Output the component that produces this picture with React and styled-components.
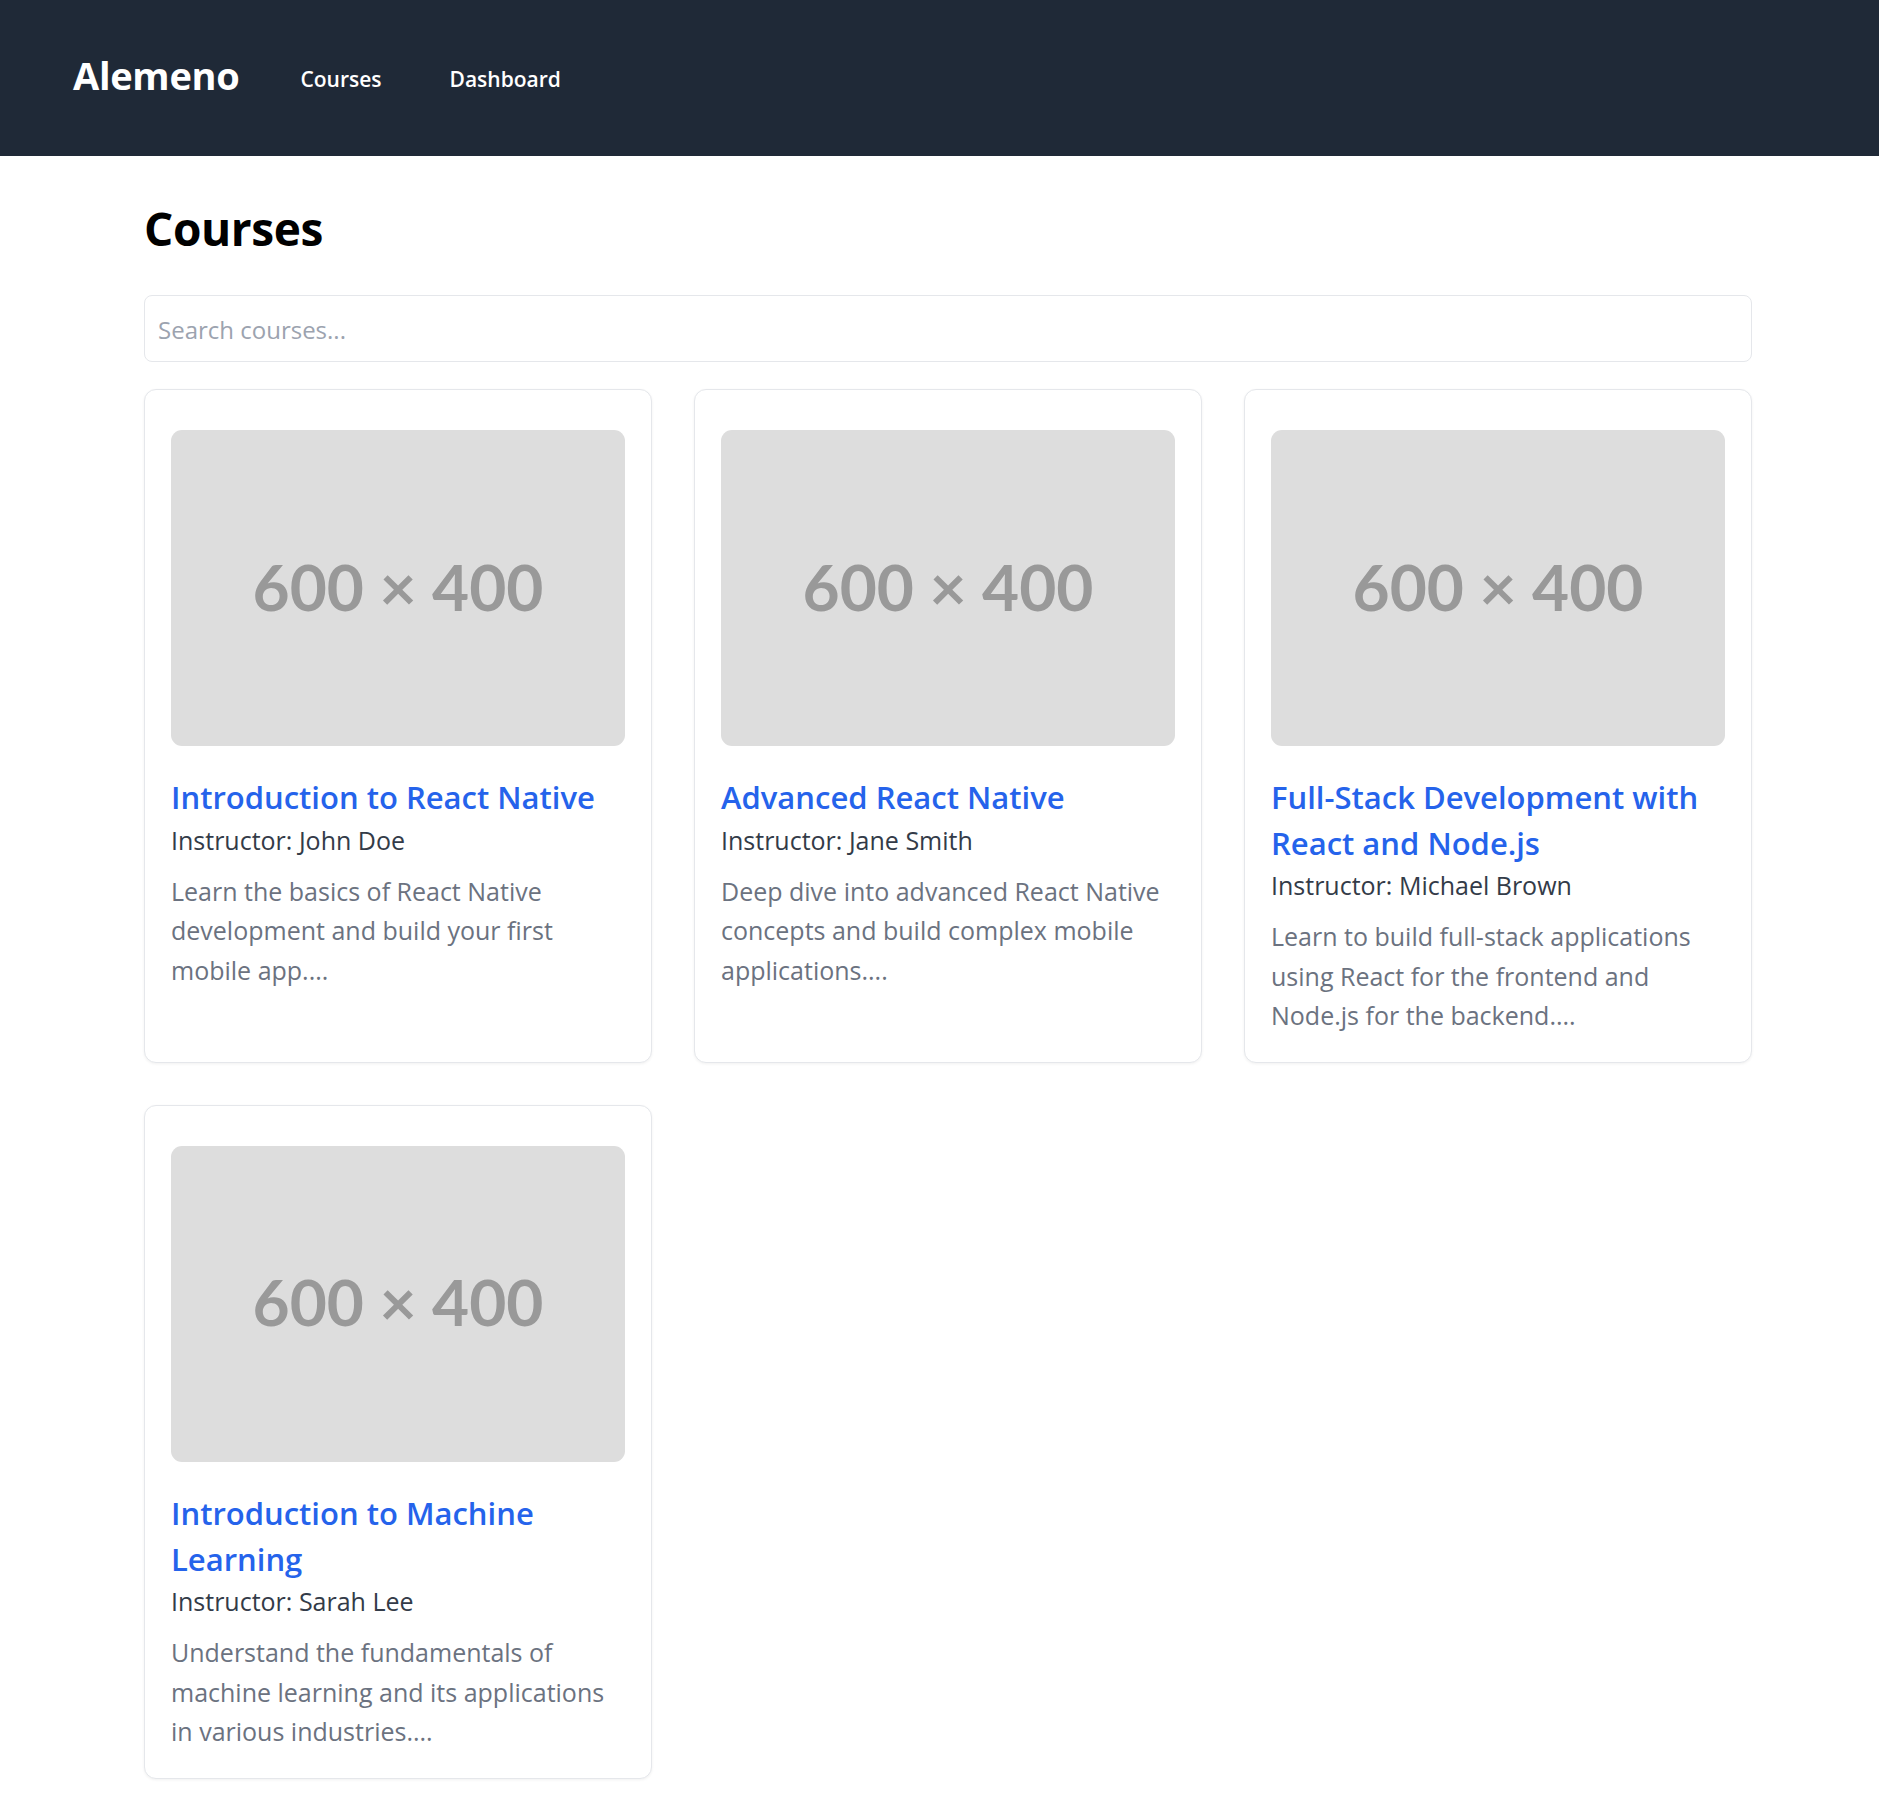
import React from 'react';
import styled, { createGlobalStyle } from 'styled-components';

const GlobalStyle = createGlobalStyle`
    * {
        box-sizing: border-box;
    }
    body {
        margin: 0;
        background: #ffffff;
        font-family: "Open Sans", "Noto Sans", sans-serif;
    }
`;

const Header = styled.header`
    height: 156px;
    background-color: #1f2937;
    display: flex;
    align-items: center;
    padding-left: 73px;
`;

const Logo = styled.div`
    color: #ffffff;
    font-size: 38px;
    font-weight: 700;
    letter-spacing: -0.3px;
    margin-top: -7px;
`;

const Nav = styled.nav`
    display: flex;
    align-items: center;
    gap: 68px;
    margin-left: 61px;
    margin-top: 2px;
`;

const NavLink = styled.a`
    color: #ffffff;
    font-size: 21px;
    font-weight: 600;
    text-decoration: none;
    cursor: pointer;
`;

const Main = styled.main`
    padding: 42px 127px 41px 144px;
`;

const PageTitle = styled.h1`
    margin: 0 0 37px;
    font-size: 46px;
    line-height: 60px;
    font-weight: 700;
    letter-spacing: -0.4px;
    color: #000000;
`;

const SearchInput = styled.input`
    display: block;
    width: 100%;
    height: 67px;
    margin: 0 0 27px;
    padding: 2px 13px 0;
    border: 1px solid #e5e7eb;
    border-radius: 8px;
    font-family: inherit;
    font-size: 24px;
    color: #111827;
    outline: none;

    &::placeholder {
        color: #9ca3af;
    }
`;

const Grid = styled.div`
    display: grid;
    grid-template-columns: repeat(3, 1fr);
    gap: 42px;
`;

const Card = styled.div`
    border: 1px solid #e5e7eb;
    border-radius: 12px;
    box-shadow: 0 1px 3px rgba(0, 0, 0, 0.06);
    padding: 40px 26px 26px;
    background: #ffffff;
`;

const Thumb = styled.div`
    height: 316px;
    padding-bottom: 4px;
    border-radius: 11px;
    background-color: #dddddd;
    display: flex;
    align-items: center;
    justify-content: center;
    color: #999999;
    font-family: Lato, "Open Sans", sans-serif;
    font-weight: 700;
    font-size: 64px;
    margin-bottom: 29px;
`;

const CardTitle = styled.h2`
    margin: 0;
    font-size: 31px;
    line-height: 45.7px;
    font-weight: 600;
    color: #2563eb;
`;

const Instructor = styled.p`
    margin: 3px 0 0;
    font-size: 25px;
    line-height: 32px;
    color: #333b48;
`;

const Description = styled.p`
    margin: 16px 0 0;
    font-size: 25px;
    line-height: 39.5px;
    color: #6b7280;
`;

const courses = [
    {
        id: 1,
        name: 'Introduction to React Native',
        instructor: 'John Doe',
        description: 'Learn the basics of React Native development and build your first mobile app....',
    },
    {
        id: 2,
        name: 'Advanced React Native',
        instructor: 'Jane Smith',
        description: 'Deep dive into advanced React Native concepts and build complex mobile applications....',
    },
    {
        id: 3,
        name: 'Full-Stack Development with React and Node.js',
        instructor: 'Michael Brown',
        description: 'Learn to build full-stack applications using React for the frontend and Node.js for the backend....',
    },
    {
        id: 4,
        name: 'Introduction to Machine Learning',
        instructor: 'Sarah Lee',
        description: 'Understand the fundamentals of machine learning and its applications in various industries....',
    },
];

const App = () => {
    return (
        <>
            <GlobalStyle />
            <Header>
                <Logo>Alemeno</Logo>
                <Nav>
                    <NavLink>Courses</NavLink>
                    <NavLink>Dashboard</NavLink>
                </Nav>
            </Header>
            <Main>
                <PageTitle>Courses</PageTitle>
                <SearchInput type="text" placeholder="Search courses..." />
                <Grid>
                    {courses.map((course) => (
                        <Card key={course.id}>
                            <Thumb>600 × 400</Thumb>
                            <CardTitle>{course.name}</CardTitle>
                            <Instructor>Instructor: {course.instructor}</Instructor>
                            <Description>{course.description}</Description>
                        </Card>
                    ))}
                </Grid>
            </Main>
        </>
    );
};

export default App;
